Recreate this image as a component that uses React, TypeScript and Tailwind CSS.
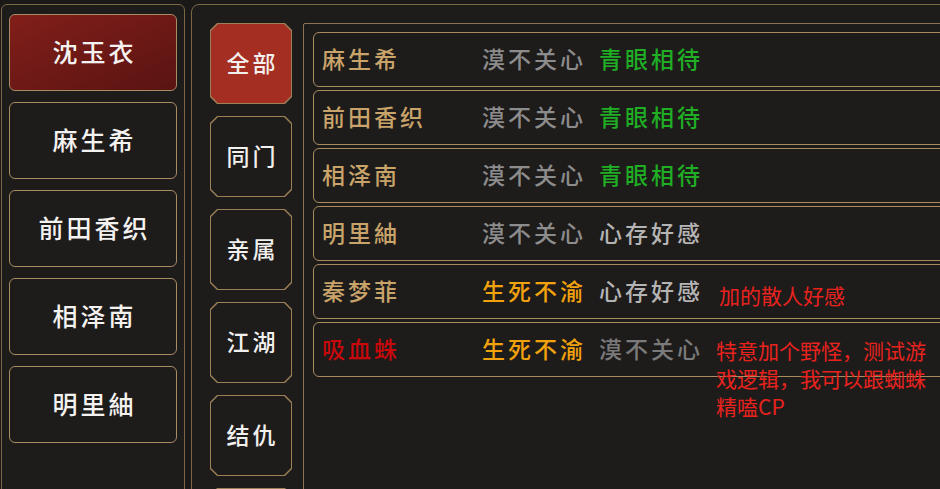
import React from 'react';

const font = "font-['Noto_Sans_CJK_SC','Noto_Sans',sans-serif]";

const people = ['沈玉衣', '麻生希', '前田香织', '相泽南', '明里紬'];
const tabs = ['全部', '同门', '亲属', '江湖', '结仇', ''];

type Row = {
  name: string;
  nameColor: string;
  a: string;
  aColor: string;
  b: string;
  bColor: string;
};

const rows: Row[] = [
  { name: '麻生希', nameColor: 'text-[#c9a46a]', a: '漠不关心', aColor: 'text-[#8c8c8c]', b: '青眼相待', bColor: 'text-[#1fae24]' },
  { name: '前田香织', nameColor: 'text-[#c9a46a]', a: '漠不关心', aColor: 'text-[#8c8c8c]', b: '青眼相待', bColor: 'text-[#1fae24]' },
  { name: '相泽南', nameColor: 'text-[#c9a46a]', a: '漠不关心', aColor: 'text-[#8c8c8c]', b: '青眼相待', bColor: 'text-[#1fae24]' },
  { name: '明里紬', nameColor: 'text-[#c9a46a]', a: '漠不关心', aColor: 'text-[#8c8c8c]', b: '心存好感', bColor: 'text-[#b4b4b4]' },
  { name: '秦梦菲', nameColor: 'text-[#c9a46a]', a: '生死不渝', aColor: 'text-[#f2a20c]', b: '心存好感', bColor: 'text-[#b4b4b4]' },
  { name: '吸血蛛', nameColor: 'text-[#c8080a]', a: '生死不渝', aColor: 'text-[#f2a20c]', b: '漠不关心', bColor: 'text-[#7a7a7a]' },
];

const chamfer =
  '[clip-path:polygon(7px_0,calc(100%_-_7px)_0,100%_7px,100%_calc(100%_-_7px),calc(100%_-_7px)_100%,7px_100%,0_calc(100%_-_7px),0_7px)]';

function Tab({ label, active }: { label: string; active?: boolean }) {
  return (
    <div className={`w-[82px] h-[81px] shrink-0 p-px bg-[#9c8158] ${chamfer}`}>
      <div
        className={`w-full h-full flex items-center justify-center pb-[2px] ${chamfer} ${
          active ? 'bg-[#a52e22]' : 'bg-[#1e1b1b]'
        }`}
      >
        <span className="text-[23px] font-medium tracking-[3px] pl-[3px] text-[#f2f0ee]">{label}</span>
      </div>
    </div>
  );
}

export default function App() {
  return (
    <div className={`w-[940px] h-[489px] overflow-hidden bg-[#1b1818] relative ${font}`}>
      <div className="flex w-[990px] h-[540px] pt-[4px] pl-px gap-[6px]">
        {/* character list */}
        <div className="w-[184px] h-full rounded-[6px] border border-[#7d6646] bg-[#1e1b1b] flex flex-col gap-[11px] pt-[9px] px-[7px]">
          {people.map((p, i) => (
            <div
              key={p}
              className={`h-[77px] rounded-[6px] border border-[#a88c62] flex items-center justify-center pb-[2px] ${
                i === 0 ? 'bg-gradient-to-br from-[#821e1a] to-[#5a1412]' : 'bg-[#1e1b1b]'
              }`}
            >
              <span className="text-[25px] font-medium tracking-[3px] pl-[3px] text-[#f4f2f0]">{p}</span>
            </div>
          ))}
        </div>

        {/* relation panel */}
        <div className="flex-1 h-full rounded-[8px] border border-[#7d6646] bg-[#1e1b1b] flex gap-[11px] pt-[18px] pl-[18px]">
          <div className="flex flex-col gap-[12px]">
            {tabs.map((t, i) => (
              <Tab key={i} label={t} active={i === 0} />
            ))}
          </div>
          <div className="flex-1 h-full border border-[#8c7450] rounded-tl-[2px] bg-[#1e1b1b] pt-[8px] pl-[9px] flex flex-col gap-[3px]">
            {rows.map((r) => (
              <div
                key={r.name}
                className="h-[55px] rounded-[6px] border border-[#a88c5e] flex items-center pl-[8px] pb-[3px]"
              >
                <span className={`w-[160px] text-[23px] font-medium tracking-[3px] ${r.nameColor}`}>{r.name}</span>
                <span className={`w-[117px] text-[23px] font-medium tracking-[3px] ${r.aColor}`}>{r.a}</span>
                <span className={`text-[23px] font-medium tracking-[3px] ${r.bColor}`}>{r.b}</span>
              </div>
            ))}
          </div>
        </div>
      </div>

      {/* annotations */}
      <div className="absolute left-[719px] top-[281px] text-[21px] leading-[28px] text-[#e8231e]">
        加的散人好感
      </div>
      <div className="absolute left-[716px] top-[336px] w-[216px] text-[21px] leading-[28px] text-[#e8231e]">
        特意加个野怪，测试游戏逻辑，我可以跟蜘蛛精嗑CP
      </div>
    </div>
  );
}
